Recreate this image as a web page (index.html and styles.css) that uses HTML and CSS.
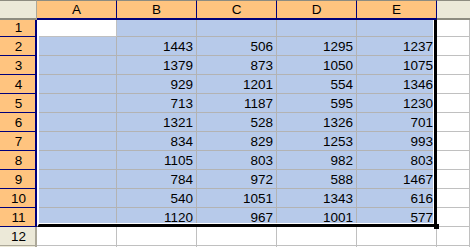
FILE: index.html
```html
<!DOCTYPE html>
<html>
<head>
<meta charset="utf-8">
<link rel="stylesheet" href="styles.css">
</head>
<body>
<div class="sheet">
  <div class="grid">
    <div class="corner"></div>
    <div class="colhead">A</div>
    <div class="colhead">B</div>
    <div class="colhead">C</div>
    <div class="colhead">D</div>
    <div class="colhead">E</div>
    <div class="colhead-off"></div>

    <div class="rowhead r1">1</div>
    <div class="cell r1 active"></div>
    <div class="cell r1 sel"></div>
    <div class="cell r1 sel"></div>
    <div class="cell r1 sel"></div>
    <div class="cell r1 sel"></div>
    <div class="cell r1 off"></div>

    <div class="rowhead">2</div>
    <div class="cell sel"></div>
    <div class="cell sel">1443</div>
    <div class="cell sel">506</div>
    <div class="cell sel">1295</div>
    <div class="cell sel">1237</div>
    <div class="cell off"></div>

    <div class="rowhead">3</div>
    <div class="cell sel"></div>
    <div class="cell sel">1379</div>
    <div class="cell sel">873</div>
    <div class="cell sel">1050</div>
    <div class="cell sel">1075</div>
    <div class="cell off"></div>

    <div class="rowhead">4</div>
    <div class="cell sel"></div>
    <div class="cell sel">929</div>
    <div class="cell sel">1201</div>
    <div class="cell sel">554</div>
    <div class="cell sel">1346</div>
    <div class="cell off"></div>

    <div class="rowhead">5</div>
    <div class="cell sel"></div>
    <div class="cell sel">713</div>
    <div class="cell sel">1187</div>
    <div class="cell sel">595</div>
    <div class="cell sel">1230</div>
    <div class="cell off"></div>

    <div class="rowhead">6</div>
    <div class="cell sel"></div>
    <div class="cell sel">1321</div>
    <div class="cell sel">528</div>
    <div class="cell sel">1326</div>
    <div class="cell sel">701</div>
    <div class="cell off"></div>

    <div class="rowhead">7</div>
    <div class="cell sel"></div>
    <div class="cell sel">834</div>
    <div class="cell sel">829</div>
    <div class="cell sel">1253</div>
    <div class="cell sel">993</div>
    <div class="cell off"></div>

    <div class="rowhead">8</div>
    <div class="cell sel"></div>
    <div class="cell sel">1105</div>
    <div class="cell sel">803</div>
    <div class="cell sel">982</div>
    <div class="cell sel">803</div>
    <div class="cell off"></div>

    <div class="rowhead">9</div>
    <div class="cell sel"></div>
    <div class="cell sel">784</div>
    <div class="cell sel">972</div>
    <div class="cell sel">588</div>
    <div class="cell sel">1467</div>
    <div class="cell off"></div>

    <div class="rowhead">10</div>
    <div class="cell sel"></div>
    <div class="cell sel">540</div>
    <div class="cell sel">1051</div>
    <div class="cell sel">1343</div>
    <div class="cell sel">616</div>
    <div class="cell off"></div>

    <div class="rowhead">11</div>
    <div class="cell sel"></div>
    <div class="cell sel">1120</div>
    <div class="cell sel">967</div>
    <div class="cell sel">1001</div>
    <div class="cell sel">577</div>
    <div class="cell off"></div>

    <div class="rowhead-off">12</div>
    <div class="cell off"></div>
    <div class="cell off"></div>
    <div class="cell off"></div>
    <div class="cell off"></div>
    <div class="cell off"></div>
    <div class="cell off"></div>

    <div class="rowhead-off"></div>
    <div class="cell off"></div>
    <div class="cell off"></div>
    <div class="cell off"></div>
    <div class="cell off"></div>
    <div class="cell off"></div>
    <div class="cell off"></div>
  </div>
  <div class="selection"></div>
  <div class="fill-handle"></div>
</div>
</body>
</html>
```

FILE: styles.css
```css
html, body {
  margin: 0;
  padding: 0;
  background: #ffffff;
  overflow: hidden;
}

.sheet {
  position: relative;
  width: 470px;
  height: 247px;
  overflow: hidden;
  font-family: "Liberation Sans", Arial, sans-serif;
  font-size: 13.5px;
  color: #000000;
}

.grid {
  display: grid;
  grid-template-columns: 37px repeat(5, 80px) 1fr;
  grid-template-rows: 20px 17px repeat(11, 19px) 1fr;
  height: 247px;
}

.grid > div {
  box-sizing: border-box;
  display: flex;
  align-items: flex-end;
  line-height: 14px;
  overflow: hidden;
}

.corner {
  background: #ece9d8;
  border-top: 1px solid #8e8c80;
  border-bottom: 2px solid #8e8c80;
  border-right: 1px solid #aca899;
}

.colhead {
  background: #ffc47f;
  border-top: 1px solid #8e8c80;
  border-bottom: 2px solid #00007a;
  border-right: 1px solid #00007a;
  justify-content: center;
  padding-bottom: 1px;
}

.colhead-off {
  background: #ece9d8;
  border-top: 1px solid #8e8c80;
  border-bottom: 2px solid #8e8c80;
}

.rowhead {
  background: #ffc47f;
  border-right: 2px solid #00007a;
  border-bottom: 1px solid #00007a;
  justify-content: center;
  padding-bottom: 1px;
  padding-left: 2px;
}

.rowhead-off {
  background: #ece9d8;
  border-right: 2px solid #aca899;
  border-bottom: 1px solid #aca899;
  justify-content: center;
  padding-bottom: 1px;
  padding-left: 2px;
}

.cell {
  border-right: 1px solid #c0c0c0;
  border-bottom: 1px solid #c0c0c0;
  justify-content: flex-end;
  padding-right: 3px;
  padding-bottom: 1px;
}

.cell.sel {
  background: #b7caea;
  border-right-color: #b3b3b3;
  border-bottom-color: #b3b3b3;
}

.cell.active {
  background: #ffffff;
}

.cell.off {
  background: #ffffff;
}

.selection {
  position: absolute;
  left: 37px;
  top: 20px;
  width: 400px;
  height: 207px;
  box-sizing: border-box;
  border-left: 2px solid #ffffff;
  border-right: 3px solid #000000;
  border-bottom: 3px solid #000000;
  box-shadow: inset -1px -1px 0 #ffffff;
  pointer-events: none;
}

.fill-handle {
  position: absolute;
  left: 434px;
  top: 224px;
  width: 5px;
  height: 5px;
  background: #000000;
}
```
